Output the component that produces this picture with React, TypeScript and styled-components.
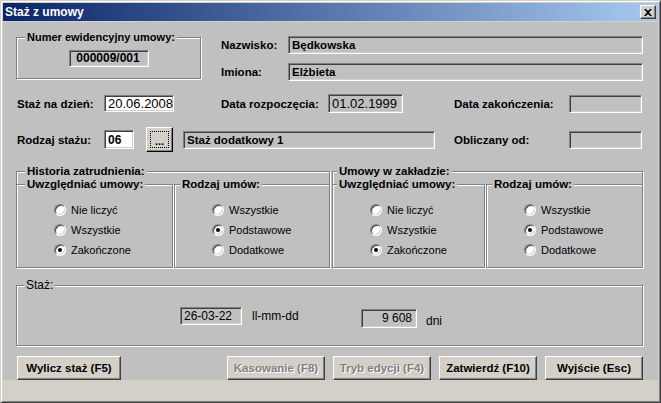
import React from 'react';
import styled, { createGlobalStyle, css } from 'styled-components';

const GlobalStyle = createGlobalStyle`
  html, body {
    margin: 0;
    padding: 0;
    background: #c0c0c0;
  }
  body {
    font-family: "Liberation Sans", Arial, sans-serif;
    color: #000;
  }
  * {
    box-sizing: border-box;
  }
`;

const raised = css`
  border: 1px solid;
  border-color: #fff #404040 #404040 #fff;
  box-shadow: inset -1px -1px 0 #808080;
`;

const sunken = css`
  border: 1px solid;
  border-color: #808080 #fff #fff #808080;
  box-shadow: inset 1px 1px 0 #404040, inset -1px -1px 0 #d4d0c8;
`;

const Window = styled.div`
  width: 661px;
  height: 403px;
  display: flex;
  flex-direction: column;
  padding: 2px;
  background: #d4d0c8;
  border: 1px solid;
  border-color: #d4d0c8 #404040 #404040 #d4d0c8;
  box-shadow: inset 1px 1px 0 #fff, inset -1px -1px 0 #808080;
`;

const TitleBar = styled.div`
  height: 18px;
  margin-bottom: 1px;
  display: flex;
  align-items: center;
  justify-content: space-between;
  padding: 0 2px;
  background: linear-gradient(to right, #0a246a, #a6caf0);
`;

const Title = styled.span`
  color: #fff;
  font-weight: bold;
  font-size: 12px;
`;

const CloseButton = styled.div`
  width: 16px;
  height: 14px;
  display: flex;
  align-items: center;
  justify-content: center;
  background: #d4d0c8;
  ${raised};
`;

const Content = styled.div`
  flex: 1;
  display: flex;
  flex-direction: column;
  padding: 0 15px 0 13px;
  background: #c0c0c0;
`;

const StatusStrip = styled.div`
  height: 20px;
  background: #d4d0c8;
`;

const TopRow = styled.div`
  display: flex;
  align-items: flex-start;
  gap: 20px;
  margin-top: 14px;
`;

const Group = styled.div<{ $w?: number; $h?: number }>`
  position: relative;
  ${p => (p.$w ? `width: ${p.$w}px; flex: none;` : 'flex: 1;')}
  ${p => p.$h && `height: ${p.$h}px;`}
  border: 1px solid #808080;
  box-shadow: inset 1px 1px 0 #fff, 1px 1px 0 #fff;
`;

const Legend = styled.span<{ $x?: number; $regular?: boolean; $size?: number }>`
  position: absolute;
  top: -8px;
  left: ${p => p.$x ?? 4}px;
  padding: 0 2px;
  line-height: 14px;
  background: #c0c0c0;
  white-space: nowrap;
  font-size: ${p => p.$size ?? 11.5}px;
  font-weight: ${p => (p.$regular ? 'normal' : 'bold')};
`;

const NumberGroup = styled(Group)`
  margin-top: 1px;
  display: flex;
  align-items: center;
  justify-content: center;
`;

const PersonRows = styled.div`
  flex: 1;
  display: flex;
  flex-direction: column;
  gap: 9px;
`;

const PersonRow = styled.div`
  display: flex;
  align-items: center;
  height: 18px;
`;

const Label = styled.span<{ $w?: number; $pl?: number }>`
  font-size: 11.5px;
  font-weight: bold;
  white-space: nowrap;
  ${p => p.$w && `width: ${p.$w}px; flex: none;`}
  padding-left: ${p => p.$pl ?? 0}px;
`;

const Field = styled.div<{
  $w?: number;
  $h?: number;
  $white?: boolean;
  $bold?: boolean;
  $size?: number;
  $right?: boolean;
  $center?: boolean;
  $mt?: number;
}>`
  ${p => (p.$w ? `width: ${p.$w}px; flex: none;` : 'flex: 1;')}
  height: ${p => p.$h ?? 18}px;
  margin-top: ${p => p.$mt ?? 0}px;
  display: flex;
  align-items: center;
  justify-content: ${p => (p.$center ? 'center' : p.$right ? 'flex-end' : 'flex-start')};
  padding: 0 4px 0 3px;
  background: ${p => (p.$white ? '#fff' : '#c0c0c0')};
  font-size: ${p => p.$size ?? 11.5}px;
  font-weight: ${p => (p.$bold ? 'bold' : 'normal')};
  white-space: nowrap;
  overflow: hidden;
  ${sunken};
`;

const FormRow = styled.div<{ $h: number; $mt: number }>`
  display: grid;
  grid-template-columns: 88px 117px 233px 115px 1fr;
  align-items: center;
  height: ${p => p.$h}px;
  margin-top: ${p => p.$mt}px;
`;

const Cell = styled.div<{ $span?: boolean }>`
  display: flex;
  align-items: center;
  ${p => p.$span && 'grid-column: 2 / 4;'}
`;

const DotsButton = styled.div`
  position: relative;
  width: 27px;
  height: 25px;
  margin: 0 10px 0 12px;
  display: flex;
  align-items: center;
  justify-content: center;
  padding-top: 2px;
  background: #d4d0c8;
  font-size: 11px;
  font-weight: bold;
  border: 1px solid;
  border-color: #fff #000 #000 #fff;
  box-shadow: inset -1px -1px 0 #808080, inset 1px 1px 0 #d4d0c8;
  &::after {
    content: '';
    position: absolute;
    inset: 3px;
    border: 1px dotted #000;
  }
`;

const GroupsRow = styled.div`
  display: flex;
  gap: 2px;
  margin-top: 19px;
`;

const OuterGroup = styled(Group)`
  height: 97px;
  padding-top: 12px;
  display: flex;
`;

const InnerRow = styled.div`
  flex: 1;
  display: flex;
  gap: 1px;
  margin: 0 -1px -1px -1px;
`;

const InnerGroup = styled(Group)`
  display: flex;
  flex-direction: column;
  padding: 15px 0 0 37px;
`;

const RadioRow = styled.div`
  height: 20px;
  display: flex;
  align-items: center;
  gap: 5px;
  font-size: 11px;
`;

const RadioDot = styled.span<{ $checked?: boolean }>`
  position: relative;
  flex: none;
  width: 12px;
  height: 12px;
  border-radius: 50%;
  background: #fff;
  border: 1px solid;
  border-color: #808080 #fff #fff #808080;
  box-shadow: inset 1px 1px 0 #404040, inset -1px -1px 0 #d4d0c8;
  ${p =>
    p.$checked &&
    css`
      &::after {
        content: '';
        position: absolute;
        left: 3px;
        top: 3px;
        width: 4px;
        height: 4px;
        border-radius: 50%;
        background: #000;
      }
    `}
`;

const StazGroup = styled(Group)`
  height: 41px;
  margin-top: 17px;
  display: flex;
  align-items: center;
  padding-left: 163px;
`;

const Unit = styled.span<{ $w?: number; $mt?: number }>`
  font-size: 12px;
  margin-left: ${p => (p.$w ? 10 : 9)}px;
  margin-top: ${p => p.$mt ?? 0}px;
  ${p => p.$w && `width: ${p.$w}px;`}
`;

const ButtonRow = styled.div`
  display: flex;
  gap: 8px;
  height: 24px;
  margin-top: 10px;
  padding-left: 1px;
`;

const Spacer = styled.div`
  flex: 1;
`;

const Button = styled.div<{ $w: number; $disabled?: boolean }>`
  width: ${p => p.$w}px;
  display: flex;
  align-items: center;
  justify-content: center;
  background: #d4d0c8;
  font-size: 11.5px;
  font-weight: bold;
  white-space: nowrap;
  ${raised};
  ${p =>
    p.$disabled &&
    css`
      color: #808080;
      text-shadow: 1px 1px 0 #fff;
    `}
`;

type RadioItem = { label: string; checked?: boolean };

const includeOpts: RadioItem[] = [
  { label: 'Nie liczyć' },
  { label: 'Wszystkie' },
  { label: 'Zakończone', checked: true },
];

const kindOpts: RadioItem[] = [
  { label: 'Wszystkie' },
  { label: 'Podstawowe', checked: true },
  { label: 'Dodatkowe' },
];

const RadioList: React.FC<{ items: RadioItem[] }> = ({ items }) => (
  <>
    {items.map(it => (
      <RadioRow key={it.label}>
        <RadioDot $checked={it.checked} />
        {it.label}
      </RadioRow>
    ))}
  </>
);

const ContractGroup: React.FC<{ title: string; w: number; leftW: number; x: number }> = ({
  title,
  w,
  leftW,
  x,
}) => (
  <OuterGroup $w={w}>
    <Legend $x={x}>{title}</Legend>
    <InnerRow>
      <InnerGroup $w={leftW}>
        <Legend $x={x}>Uwzględniać umowy:</Legend>
        <RadioList items={includeOpts} />
      </InnerGroup>
      <InnerGroup>
        <Legend $x={5}>Rodzaj umów:</Legend>
        <RadioList items={kindOpts} />
      </InnerGroup>
    </InnerRow>
  </OuterGroup>
);

export default function App() {
  return (
    <>
      <GlobalStyle />
      <Window>
        <TitleBar>
          <Title>Staż z umowy</Title>
          <CloseButton>
            <svg width="8" height="7" viewBox="0 0 8 7">
              <path d="M0 0h2l2 2 2-2h2L5 3.5 8 7H6L4 5 2 7H0l3-3.5z" fill="#000" />
            </svg>
          </CloseButton>
        </TitleBar>
        <Content>
          <TopRow>
            <NumberGroup $w={185} $h={42}>
              <Legend $x={8} $size={11}>Numer ewidencyjny umowy:</Legend>
              <Field $w={80} $h={17} $bold $size={12} $center>
                000009/001
              </Field>
            </NumberGroup>
            <PersonRows>
              <PersonRow>
                <Label $w={67}>Nazwisko:</Label>
                <Field $bold>Będkowska</Field>
              </PersonRow>
              <PersonRow>
                <Label $w={67}>Imiona:</Label>
                <Field $bold>Elżbieta</Field>
              </PersonRow>
            </PersonRows>
          </TopRow>

          <FormRow $h={19} $mt={13}>
            <Label $pl={1}>Staż na dzień:</Label>
            <Field $w={70} $h={17} $white $size={13}>
              20.06.2008
            </Field>
            <Cell>
              <Label $w={107}>Data rozpoczęcia:</Label>
              <Field $w={75} $h={19} $size={13}>
                01.02.1999
              </Field>
            </Cell>
            <Label>Data zakończenia:</Label>
            <Field $w={73} $h={18} />
          </FormRow>

          <FormRow $h={25} $mt={14}>
            <Label $pl={1}>Rodzaj stażu:</Label>
            <Cell $span>
              <Field $w={30} $h={19} $white $bold $size={12}>
                06
              </Field>
              <DotsButton>...</DotsButton>
              <Field $w={252} $h={18} $bold>
                Staż dodatkowy 1
              </Field>
            </Cell>
            <Label>Obliczany od:</Label>
            <Field $w={73} $h={18} />
          </FormRow>

          <GroupsRow>
            <ContractGroup title="Historia zatrudnienia:" w={314} leftW={157} x={8} />
            <ContractGroup title="Umowy w zakładzie:" w={311} leftW={153} x={4} />
          </GroupsRow>

          <StazGroup>
            <Legend $x={7} $regular $size={12}>Staż:</Legend>
            <Field $w={62} $h={18} $size={12}>
              26-03-22
            </Field>
            <Unit $w={109}>ll-mm-dd</Unit>
            <Field $w={56} $h={19} $size={12} $right $mt={5}>
              9 608
            </Field>
            <Unit $mt={10}>dni</Unit>
          </StazGroup>

          <ButtonRow>
            <Button $w={104}>Wylicz staż (F5)</Button>
            <Spacer />
            <Button $w={98} $disabled>Kasowanie (F8)</Button>
            <Button $w={98} $disabled>Tryb edycji (F4)</Button>
            <Button $w={98}>Zatwierdź (F10)</Button>
            <Button $w={98}>Wyjście (Esc)</Button>
          </ButtonRow>
        </Content>
        <StatusStrip />
      </Window>
    </>
  );
}
